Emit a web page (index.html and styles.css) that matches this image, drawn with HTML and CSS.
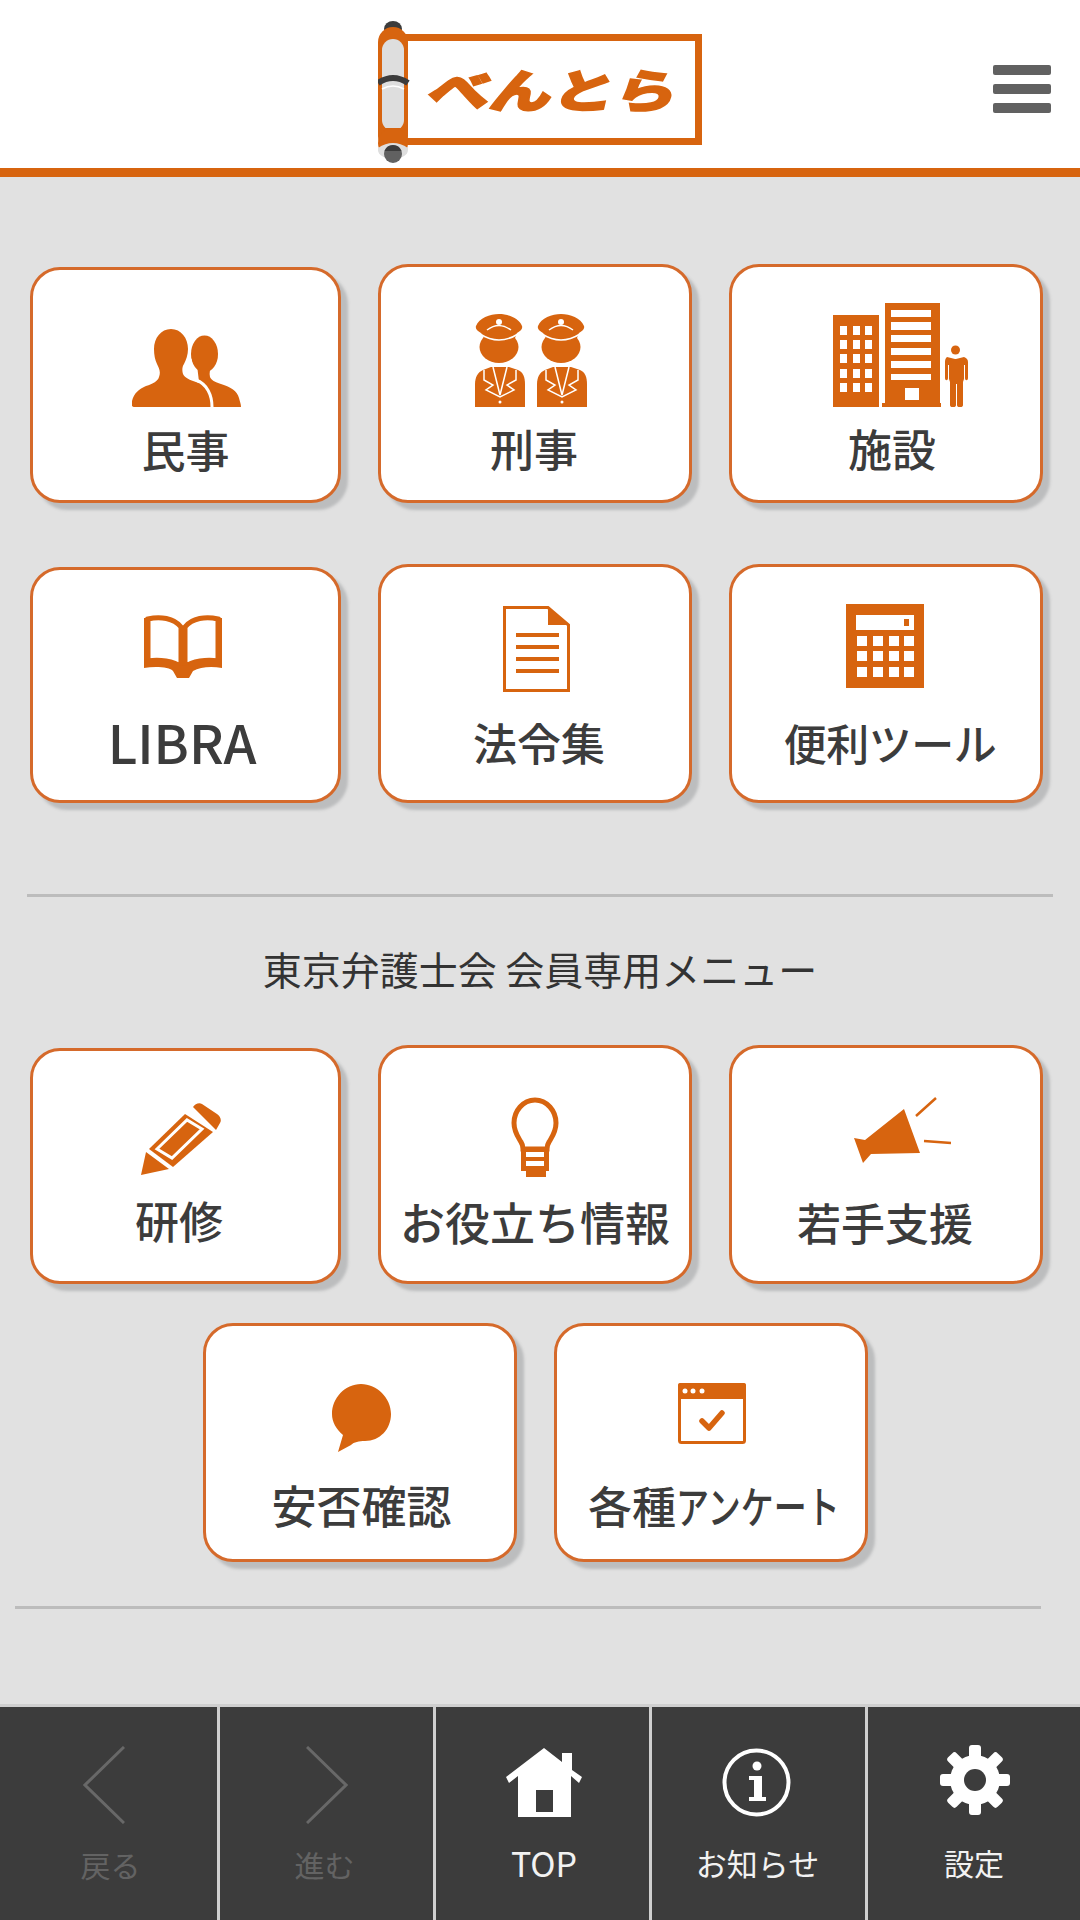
FILE: index.html
```html
<!DOCTYPE html>
<html lang="ja">
<head>
    <meta charset="UTF-8">
    <meta name="viewport" content="width=device-width, initial-scale=1.0">
    <title>べんとら</title>
    <link rel="stylesheet" href="styles.css">
</head>
<body>
    <header class="header">
        <svg class="logo" viewBox="0 0 324 146">
            <rect x="26" y="19.500" width="294.500" height="104" fill="#fff" stroke="#d7640f" stroke-width="7"/>
            <text class="logo-text" x="0" y="0" transform="translate(47 90) skewX(-12)" textLength="250" lengthAdjust="spacingAndGlyphs">べんとら</text>
            <rect x="6" y="3" width="18" height="16" rx="9" fill="#3c3c3c"/>
            <rect x="0" y="9" width="30" height="124" rx="15" fill="#d7640f"/>
            <rect x="4" y="21" width="22" height="92" rx="11" fill="#dedede"/>
            <rect x="4" y="110" width="22" height="3" fill="#d7640f"/>
            <circle cx="15" cy="125" r="15" fill="#d7640f"/>
            <path d="M0 130q15-10 30 0v2a15 9 0 0 1-30 0z" fill="#dedede"/>
            <path d="M0 65q15-10 30 0" fill="none" stroke="#3c3c3c" stroke-width="6"/>
            <path d="M4 71q11-6 22 0" fill="none" stroke="#fff" stroke-width="1.500"/>
            <circle cx="15" cy="136" r="9" fill="#616161"/>
            <path d="M6.500 133a9 9 0 0 1 17 0z" fill="#3c3c3c"/>
        </svg>
        <div class="menu"><span></span><span></span><span></span></div>
    </header>

    <main class="main">
        <div class="row">
            <a class="card">
                <svg class="icon icon-people" viewBox="0 0 109 78">
                    <ellipse cx="72.500" cy="25" rx="13.500" ry="18.500"/>
                    <path d="M65 36h15c-2 4-3 8-2 12 1 3 5 5 11 7 10 3 16 7 18 14 1 4 2 6 2 9H70z"/>
                    <path d="M58 30c1 6 2 12 4 19" fill="none" stroke="#fff" stroke-width="3"/>
                    <path d="M39 0c10 0 17 9 17 20 0 6-2 11-4 15-2 3-2 7-1 10 2 4 7 6 13 8 10 4 18 10 18 25H2C0 78-1 76 0 72c2-8 7-12 14-15 7-2 12-5 13-9 2-5 0-9-2-13-2-4-3-9-3-15C22 9 29 0 39 0z"/>
                    <path d="M64 51c11 4 16 15 16 27" fill="none" stroke="#fff" stroke-width="3"/>
                </svg>
                <span class="label">民事</span>
            </a>
            <a class="card card-wide">
                <svg class="icon icon-police" viewBox="0 0 112 93">
                    <defs>
                        <g id="officer">
                            <path d="M1 12C4 4 15 0 24 0s20 4 23 12c1 3-2 5-5 7l-2 5H9l-3-5c-3-2-6-4-5-7z"/>
                            <ellipse cx="24" cy="33" rx="19.500" ry="16"/>
                            <path d="M5 20q19 12 38 0" fill="none" stroke="#fff" stroke-width="1.500"/>
                            <path d="M12 16q12-9 24 0" fill="none" stroke="#fff" stroke-width="1.500"/>
                            <circle cx="24" cy="8" r="3" fill="#fff"/>
                            <path d="M0 93V70c0-7 3-12 8-14l8-3h18l9 3c5 2 7 7 7 14v23z"/>
                            <path d="M9 56v10l9 5-7 5 14 7 14-7-7-5 9-5V56" fill="none" stroke="#fff" stroke-width="1.500"/>
                            <path d="M18 53l7 28 7-28" fill="none" stroke="#fff" stroke-width="1.500"/>
                            <circle cx="25" cy="88" r="1.500" fill="#fff"/>
                        </g>
                    </defs>
                    <use href="#officer"/>
                    <use href="#officer" x="62"/>
                </svg>
                <span class="label label-police">刑事</span>
            </a>
            <a class="card card-wide">
                <svg class="icon icon-building" viewBox="0 0 135 104">
                    <path fill-rule="evenodd" d="M0 12h46v92H0zM7 23v9h7v-9zm13 0v9h7v-9zm12 0v9h7v-9zM7 37v9h7v-9zm13 0v9h7v-9zm12 0v9h7v-9zM7 51v9h7v-9zm13 0v9h7v-9zm12 0v9h7v-9zM7 66v9h7v-9zm13 0v9h7v-9zm12 0v9h7v-9zM7 80v9h7v-9zm13 0v9h7v-9zm12 0v9h7v-9z"/>
                    <path fill-rule="evenodd" d="M52 0h55v100h1v4H49v-4h3zm6 7v7h40V7zm0 12v8h40v-8zm0 13v7h40v-7zm0 13v7h40v-7zm0 13v7h40v-7zm0 13v6h40v-6zm14 14v12h14V85z"/>
                    <circle cx="122.500" cy="47" r="4.500"/>
                    <path d="M114 54l8 2 1 0 8-2c2 1 4 2 4 5v16c0 3-3 3-3 0V62h-1v14l-1 3v23c0 3-6 3-6 0V81h-1v21c0 3-6 3-6 0V79l-1-3V62h-1v13c0 3-3 3-3 0V59c0-3 1-4 2-5z"/>
                </svg>
                <span class="label label-building">施設</span>
            </a>
        </div>

        <div class="row row-next">
            <a class="card">
                <svg class="icon icon-book" viewBox="0 0 78 63">
                    <path d="M4 4c12-3 26-1 33 8v40c-7-6-22-8-33-6z" fill="none" stroke="#d7640f" stroke-width="5"/>
                    <path d="M74 4c-12-3-26-1-33 8v40c7-6 22-8 33-6z" fill="none" stroke="#d7640f" stroke-width="5"/>
                    <path d="M0 3h2v42h-2zM76 3h2v42h-2z"/>
                    <path d="M0 45c14-2 28-1 35 5l4 1 4-1c7-6 21-7 35-5v8c-11-2-22-1-29 3l-4 7h-12l-4-7C26 52 11 51 0 53z"/>
                </svg>
                <span class="label label-libra">LIBRA</span>
            </a>
            <a class="card card-wide">
                <svg class="icon icon-doc" viewBox="0 0 67 86">
                    <path d="M1.500 1.500H45L65.500 19v65.500h-64z" fill="none" stroke="#d7640f" stroke-width="3"/>
                    <path d="M45 2v17h20z"/>
                    <path d="M13 27h43v4H13zM13 39h43v4H13zM13 51h43v4H13zM13 63h43v4H13z"/>
                </svg>
                <span class="label label-doc">法令集</span>
            </a>
            <a class="card card-wide">
                <svg class="icon icon-calc" viewBox="0 0 78 84">
                    <path fill-rule="evenodd" d="M0 0h78v84H0zM10 11v15h58V11zM11 32v10h10V32zm16 0v10h10V32zm16 0v10h10V32zm15 0v10h10V32zM11 47v10h10V47zm16 0v10h10V47zm16 0v10h10V47zm15 0v10h10V47zM11 63v10h10V63zm16 0v10h10V63zm16 0v10h10V63zm15 0v10h10V63z"/>
                    <rect x="58" y="15" width="5" height="7"/>
                </svg>
                <span class="label label-calc">便利ツール</span>
            </a>
        </div>

        <div class="divider"></div>
        <p class="title">東京弁護士会 会員専用メニュー</p>

        <div class="row row-member">
            <a class="card">
                <svg class="icon icon-pencil" viewBox="0 0 80 73">
                    <path d="M0 72l5-23 23 17z"/>
                    <path d="M8 46L44 11l28 18-40 35z"/>
                    <path d="M16 46l30-29 15 9-30 29z" fill="none" stroke="#fff" stroke-width="3"/>
                    <path d="M52 4c2-3 6-5 9-3l15 10c3 2 5 6 3 9l-4 7z"/>
                </svg>
                <span class="label label-pencil">研修</span>
            </a>
            <a class="card card-wide">
                <svg class="icon icon-bulb" viewBox="0 0 48 80">
                    <path d="M24 3C12 3 3 14 3 26c0 9 4 14 7 19 2 3 2 5 2 7h24c0-2 0-4 2-7 3-5 7-10 7-19C45 14 36 3 24 3z" fill="none" stroke="#d7640f" stroke-width="5"/>
                    <path fill-rule="evenodd" d="M10 50h28v24h-3v6H15v-6h-5zM15 55v5h18v-5zM15 64v5h18v-5z"/>
                </svg>
                <span class="label label-bulb">お役立ち情報</span>
            </a>
            <a class="card card-wide">
                <svg class="icon icon-mega" viewBox="0 0 98 66">
                    <path d="M0 41l11 2 39-31 16 44-49 1-8 9z"/>
                    <path d="M62 19L82 1M70 44l27 2" fill="none" stroke="#d7640f" stroke-width="2.500"/>
                </svg>
                <span class="label label-mega">若手支援</span>
            </a>
        </div>

        <div class="row row-last">
            <a class="card card-wide">
                <svg class="icon icon-bubble" viewBox="0 0 59 68">
                    <path d="M29 0c16 0 30 14 30 30 0 15-11 27-26 27-6 0-11 1-14 4L6 68l5-17C4 45 0 38 0 30 0 14 13 0 29 0z"/>
                </svg>
                <span class="label label-bubble">安否確認</span>
            </a>
            <a class="card card-wide">
                <svg class="icon icon-window" viewBox="0 0 68 61">
                    <rect x="1.500" y="1.500" width="65" height="58" rx="2" fill="none" stroke="#d7640f" stroke-width="3"/>
                    <path d="M0 2a2 2 0 0 1 2-2h64a2 2 0 0 1 2 2v14H0z"/>
                    <circle cx="7" cy="8" r="2.500" fill="#fff"/>
                    <circle cx="15" cy="8" r="2.500" fill="#fff"/>
                    <circle cx="24" cy="8" r="2.500" fill="#fff"/>
                    <path d="M24 38l7 7 13-15" fill="none" stroke="#d7640f" stroke-width="5.500" stroke-linecap="round" stroke-linejoin="round"/>
                </svg>
                <span class="label label-survey">各種<span class="kana">アンケート</span></span>
            </a>
        </div>

        <div class="divider divider-last"></div>
    </main>

    <nav class="nav">
        <a class="nav-item nav-off">
            <svg class="nav-icon icon-back" viewBox="0 0 42 78"><path d="M41 1L2 39l39 38" fill="none" stroke="#686868" stroke-width="3"/></svg>
            <span class="nav-label label-back">戻る</span>
        </a>
        <a class="nav-item nav-off">
            <svg class="nav-icon icon-next" viewBox="0 0 42 78"><path d="M1 1l39 38L1 77" fill="none" stroke="#686868" stroke-width="3"/></svg>
            <span class="nav-label label-next">進む</span>
        </a>
        <a class="nav-item">
            <svg class="nav-icon icon-home" viewBox="0 0 76 69"><path fill-rule="evenodd" d="M38 0l18 14V5h10v17l10 7-3 6-8-7v41H12V28l-9 7-3-6zM30 42v22h17V42z" fill="#fff"/></svg>
            <span class="nav-label label-top">TOP</span>
        </a>
        <a class="nav-item">
            <svg class="nav-icon icon-info" viewBox="0 0 69 69">
                <circle cx="34.500" cy="34.500" r="32" fill="none" stroke="#fff" stroke-width="4"/>
                <circle cx="35" cy="18" r="4.500" fill="#fff"/>
                <path d="M27 28h13v21h4v4H27v-4h5V32h-5z" fill="#fff"/>
            </svg>
            <span class="nav-label label-news">お知らせ</span>
        </a>
        <a class="nav-item">
            <svg class="nav-icon icon-gear" viewBox="0 0 70 70">
                <g fill="#fff">
                    <circle cx="35" cy="35" r="25"/>
                    <rect x="29" y="0" width="12" height="70" rx="3"/>
                    <rect x="29" y="0" width="12" height="70" rx="3" transform="rotate(45 35 35)"/>
                    <rect x="29" y="0" width="12" height="70" rx="3" transform="rotate(90 35 35)"/>
                    <rect x="29" y="0" width="12" height="70" rx="3" transform="rotate(135 35 35)"/>
                </g>
                <circle cx="35" cy="35" r="11" fill="#3c3c3c"/>
            </svg>
            <span class="nav-label">設定</span>
        </a>
    </nav>
</body>
</html>
```

FILE: styles.css
```css
* {
    box-sizing: border-box;
}
body {
    margin: 0;
    width: 1080px;
    height: 1920px;
    display: flex;
    flex-direction: column;
    font-family: "Noto Sans CJK JP", "Noto Sans", sans-serif;
    background-color: #e1e1e1;
    color: #3c3c3c;
}

/* header */
.header {
    height: 177px;
    padding: 18px 0 0 378px;
    display: flex;
    align-items: flex-start;
    background-color: #fff;
    border-bottom: 9px solid #d7640f;
}
.logo {
    width: 324px;
    height: 146px;
}
.logo-text {
    font-family: "Noto Sans CJK JP", sans-serif;
    font-size: 46px;
    font-weight: 900;
    fill: #d7640f;
    stroke: #d7640f;
    stroke-width: 1.5px;
}
.menu {
    margin: 47px 0 0 291px;
    display: flex;
    flex-direction: column;
    gap: 9px;
}
.menu span {
    display: block;
    width: 58px;
    height: 10px;
    border-radius: 2px;
    background-color: #616161;
}

/* cards */
.main {
    flex: 1;
    padding-top: 87px;
}
.row {
    display: flex;
    align-items: flex-end;
    gap: 37px;
    padding-left: 30px;
}
.row-next {
    margin-top: 61px;
}
.row-member {
    margin-top: 47px;
}
.row-last {
    margin-top: 39px;
    padding-left: 203px;
}
.card {
    width: 311px;
    height: 236px;
    display: flex;
    flex-direction: column;
    align-items: center;
    background-color: #fff;
    border: 3px solid #d56a2b;
    border-radius: 30px;
    box-shadow: 7px 7px 3px #bcbdbe;
}
.card-wide {
    width: 314px;
    height: 239px;
}
.label {
    height: 60px;
    margin-top: -3px;
    line-height: 60px;
    font-size: 44px;
    font-weight: 500;
    white-space: nowrap;
}
.icon {
    display: block;
    fill: #d7640f;
}

.icon-people { width: 109px; height: 78px; margin: 59px 0 15px 2px; }
.icon-police { width: 112px; height: 93px; margin: 47px 0 14px -8px; }
.icon-building { width: 135px; height: 104px; margin: 36px 0 14px 29px; }
.icon-book { width: 78px; height: 63px; margin: 45px 0 36px -5px; }
.icon-doc { width: 67px; height: 86px; margin: 39px 0 23px 3px; }
.icon-calc { width: 78px; height: 84px; margin: 37px 0 27px -2px; }
.icon-pencil { width: 80px; height: 73px; margin: 52px 0 17px -9px; }
.icon-bulb { width: 48px; height: 80px; margin: 49px 0 18px 0; }
.icon-mega { width: 98px; height: 66px; margin: 49px 0 32px 34px; }
.icon-bubble { width: 59px; height: 68px; margin: 58px 0 26px 2px; }
.icon-window { width: 68px; height: 61px; margin: 57px 0 34px 1px; }

.label-police { margin-left: -2px; }
.label-building { margin-left: 12px; }
.label-libra { margin-left: -7px; font-size: 53px; }
.label-doc { margin-left: 8px; }
.label-calc { margin-left: 8px; font-size: 43px; letter-spacing: -0.5px; }
.label-pencil { margin-left: -13px; }
.label-bulb { font-size: 45px; }
.label-mega { margin-left: -2px; }
.label-bubble { margin-left: 3px; font-size: 45px; }
.label-survey { margin-left: 7px; }
.kana {
    display: inline-block;
    width: 165px;
    transform: scaleX(0.75);
    transform-origin: left;
}

/* member section */
.divider {
    width: 1026px;
    height: 3px;
    margin: 91px 0 0 27px;
    background-color: #bcbcbc;
}
.divider-last {
    margin: 44px 0 0 15px;
}
.title {
    margin: 41px 0 0;
    height: 60px;
    line-height: 60px;
    font-size: 39px;
    text-align: center;
    color: #333;
}

/* bottom nav */
.nav {
    height: 216px;
    display: grid;
    grid-template-columns: 217px 216px 216px 216px 215px;
    background-color: #3c3c3c;
    border-top: 3px solid #cfcfcf;
}
.nav-item {
    display: flex;
    flex-direction: column;
    align-items: center;
    color: #f2f2f2;
}
.nav-item + .nav-item {
    border-left: 3px solid #cfcfcf;
}
.nav-off {
    color: #636363;
}
.nav-label {
    height: 40px;
    margin-top: -3px;
    line-height: 40px;
    font-size: 30px;
}
.nav-icon {
    display: block;
}
.icon-back { width: 42px; height: 78px; margin: 39px 0 23px -9px; }
.icon-next { width: 42px; height: 78px; margin: 39px 0 23px 0; }
.icon-home { width: 76px; height: 69px; margin: 41px 0 29px 3px; }
.icon-info { width: 69px; height: 69px; margin: 41px 0 29px -5px; }
.icon-gear { width: 70px; height: 70px; margin: 38px 0 30px 2px; }
.label-back { margin-left: 4px; }
.label-next { margin-left: -4px; }
.label-top { margin-left: 3px; font-size: 34px; }
.label-news { margin-left: -2px; font-size: 31px; }
```
